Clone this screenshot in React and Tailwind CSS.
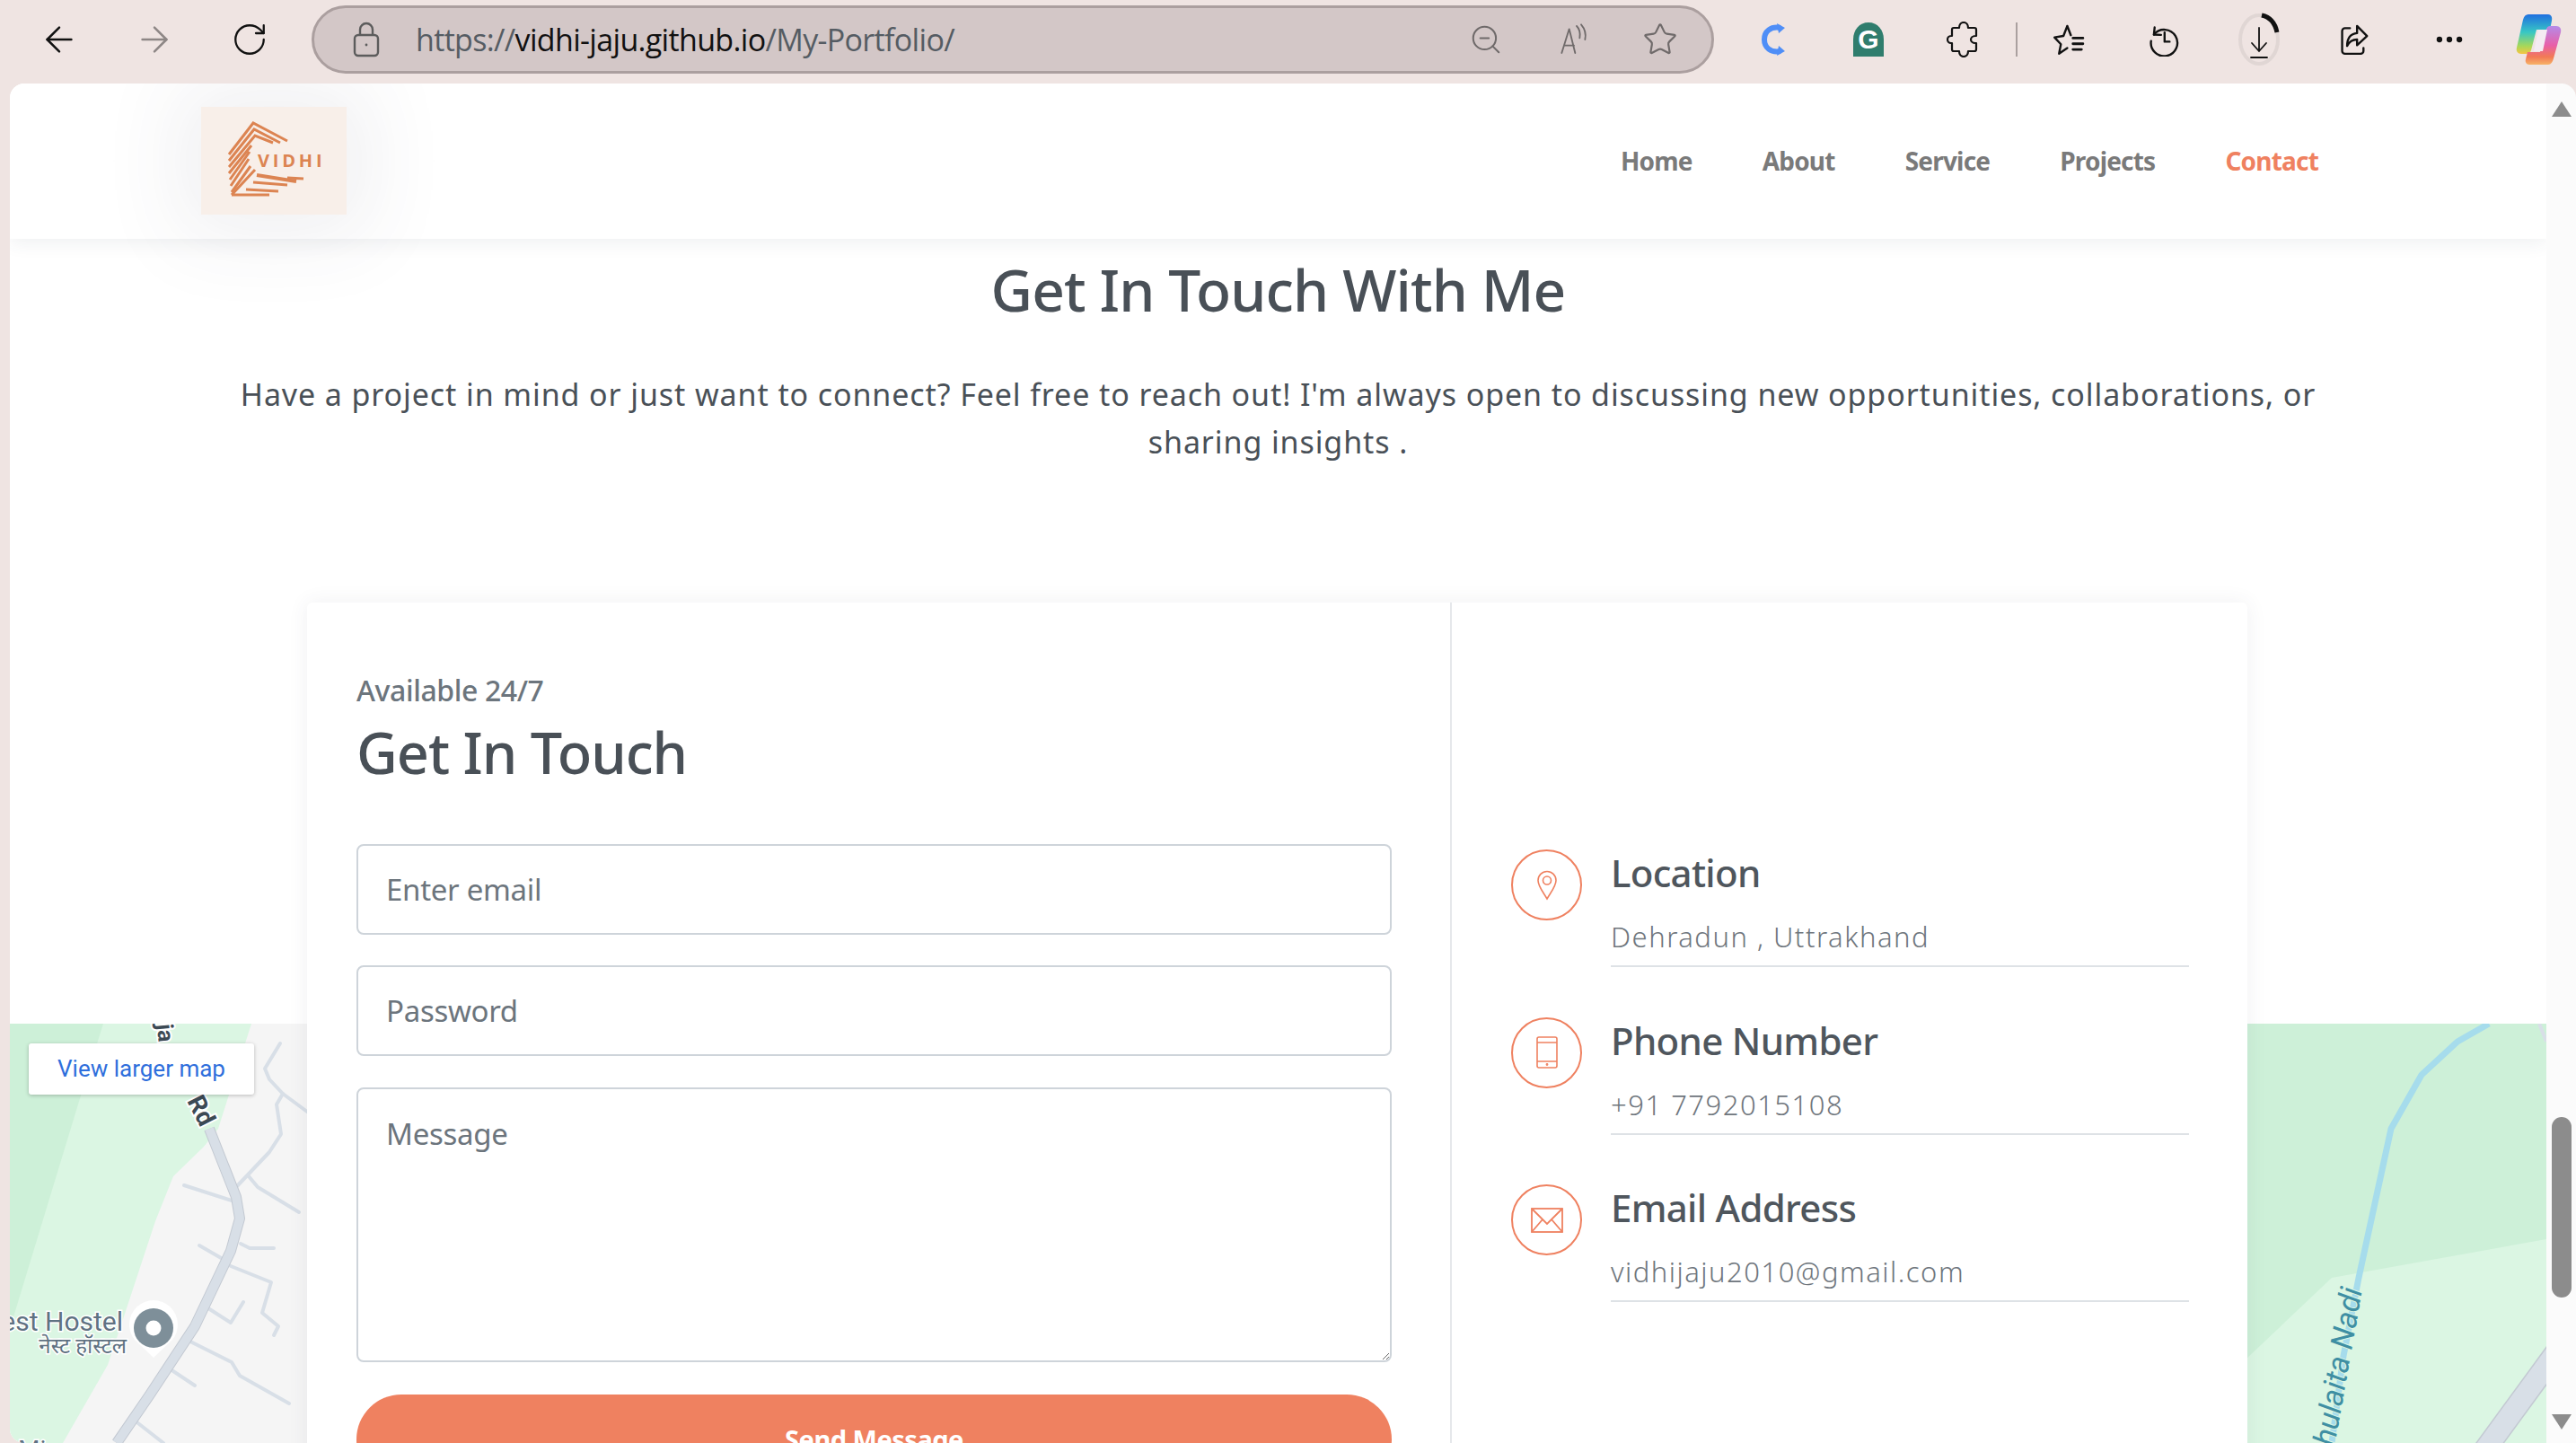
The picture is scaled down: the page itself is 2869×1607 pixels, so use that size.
import React from 'react';
import { ArrowLeft, ArrowRight, RotateCw, ZoomOut, Star, MoreHorizontal } from 'lucide-react';

const sans = "font-['Noto_Sans','Open_Sans',sans-serif]";

function Slot({ children, className = 'w-[106px]' }) {
  return <div className={`flex h-full items-center justify-center flex-shrink-0 ${className}`}>{children}</div>;
}

function Svg({ children, size = 38 }) {
  return (
    <svg width={size} height={size} viewBox="0 0 24 24" fill="none" stroke="#111" strokeWidth="1.3" strokeLinecap="round" strokeLinejoin="round">
      {children}
    </svg>
  );
}

function LockIcon() {
  return (
    <svg width="30" height="40" viewBox="0 0 30 40" fill="none" stroke="#5c5c5c" strokeWidth="2.400">
      <rect x="2" y="15" width="26" height="23" rx="4" />
      <path d="M8 15V9a7 7 0 0 1 14 0v6" />
      <circle cx="15" cy="26" r="1.400" fill="#5c5c5c" stroke="none" />
    </svg>
  );
}

function ReadAloud() {
  return (
    <Svg size={40}>
      <path d="M5 21 10 5l4 16M6.600 16h6.600" stroke="#6f6a6a" strokeWidth="1.100" />
      <path d="M15 3c2 2 2.600 4.600 2 8M18 2c2.600 3 3.400 6.400 2.600 10" stroke="#6f6a6a" strokeWidth="1.100" />
    </Svg>
  );
}

function CIcon() {
  return (
    <svg width="36" height="40" viewBox="0 0 36 40" fill="none">
      <path d="M26 7C15 5 8 11 8 20s7 15 18 13" stroke="#4f8ef7" strokeWidth="6" />
      <path d="M22 2l9 5-7 6zM22 38l9-5-7-6z" fill="#4f8ef7" />
    </svg>
  );
}

function GrammarlyIcon() {
  return (
    <svg width="36" height="40" viewBox="0 0 36 40">
      <path d="M18 1c10 0 17 8 17 19v19H1V20C1 9 8 1 18 1z" fill="#2f7d6d" />
      <text x="18" y="30" textAnchor="middle" fontFamily="Liberation Sans" fontWeight="700" fontSize="30" fill="#fff">G</text>
    </svg>
  );
}

function ExtensionsIcon() {
  return (
    <svg width="38" height="40" viewBox="0 0 38 40" fill="none" stroke="#111" strokeWidth="2.200" strokeLinejoin="round">
      <path d="M14 7c0-3.500 2-6 5-6s5 2.500 5 6h7a2 2 0 0 1 2 2v7h-1c-3 0-5 2-5 4s2 4 5 4h1v7a2 2 0 0 1-2 2h-7c0 3.500-2 6-5 6s-5-2.500-5-6H8a2 2 0 0 1-2-2v-7H5c-2.500 0-4-2-4-4s1.500-4 4-4h1V9a2 2 0 0 1 2-2z" />
    </svg>
  );
}

function FavoritesIcon() {
  return (
    <Svg>
      <path d="M11 2.500 8.300 9.500 2 10.500l4.500 4.800L5.200 22 11 18M11 2.500 13.500 9" strokeWidth="1.500" />
      <path d="M15 11h7M15 15h7M15 19h6" strokeWidth="1.800" />
    </Svg>
  );
}

function HistoryIcon() {
  return (
    <Svg>
      <path d="M5.500 3.500 5 8.500l5 .3" strokeWidth="1.500" />
      <path d="M5 8.500A9.300 9.300 0 1 1 3 13" strokeWidth="1.500" />
      <path d="M12.500 7v6.500H16" strokeWidth="1.500" />
    </Svg>
  );
}

function DownloadIcon() {
  return (
    <svg width="46" height="60" viewBox="0 0 46 60" fill="none">
      <ellipse cx="23" cy="30" rx="21" ry="27" stroke="#e0d6d4" strokeWidth="4" />
      <path d="M26 3c9 2 15 9 17 19" stroke="#111" strokeWidth="5" />
      <path d="M23 17v26M15 34l8 9 8-9M14 50h18" stroke="#111" strokeWidth="1.800" strokeLinecap="round" />
    </svg>
  );
}

function ShareIcon() {
  return (
    <Svg>
      <path d="M9 4H5.500A2 2 0 0 0 3.500 6v14A2 2 0 0 0 5.500 22h11a2 2 0 0 0 2-2v-2" strokeWidth="1.500" />
      <path d="M14 2.500 21 9.500l-7 6.500v-4c-3.500 0-5.500 1.500-7 4.500 0-5.500 2.500-8.500 7-9z" strokeWidth="1.500" />
    </Svg>
  );
}

function CopilotIcon() {
  return (
    <svg width="52" height="62" viewBox="0 0 52 62">
      <defs>
        <linearGradient id="copA" x1="0" y1="0" x2="0" y2="1">
          <stop offset="0" stopColor="#1f6fe0" />
          <stop offset="0.45" stopColor="#38c7c4" />
          <stop offset="0.8" stopColor="#a6d85a" />
          <stop offset="1" stopColor="#f5c542" />
        </linearGradient>
        <linearGradient id="copB" x1="0" y1="0" x2="0" y2="1">
          <stop offset="0" stopColor="#b58be8" />
          <stop offset="0.5" stopColor="#e85fa8" />
          <stop offset="0.8" stopColor="#f27a55" />
          <stop offset="1" stopColor="#f7b267" />
        </linearGradient>
      </defs>
      <path d="M15 3h22c3 0 5 3 4 7l-2 10H24l-6 23c-1 3-3 4-6 4H7c-4 0-6-3-5-7L9 9c1-4 3-6 6-6z" fill="url(#copA)" />
      <path d="M37 59H16c-3 0-5-3-4-6l2-8h14l7-26c1-2 2-3 4-3h7c4 0 6 3 5 7l-8 29c-1 4-3 7-6 7z" fill="url(#copB)" />
      <path d="M26 20h10l-5 24H21z" fill="#f4ebf2" />
    </svg>
  );
}

function BrowserBar() {
  return (
    <div className="flex h-[93px] flex-shrink-0 items-center pl-[13px] pb-[5px] bg-[#efe4e2]">
      <Slot><ArrowLeft size={46} strokeWidth={1.300} color="#111" /></Slot>
      <Slot><ArrowRight size={46} strokeWidth={1.300} color="#8d8685" /></Slot>
      <Slot><RotateCw size={42} strokeWidth={1.300} color="#111" /></Slot>
      <div className="ml-[16px] flex h-[76px] w-[1562px] flex-shrink-0 items-center rounded-full border-[3px] border-[#ab9f9f] bg-[#d3c7c7] pl-[43px]">
        <LockIcon />
        <div className="ml-[40px] flex-1 font-['Open_Sans',sans-serif] text-[34px] tracking-[-0.67px] text-[#555c63]">
          https://<span className="text-[#111]">vidhi-jaju.github.io</span>/My-Portfolio/
        </div>
        <ZoomOut size={38} strokeWidth={1.300} color="#6f6a6a" />
        <div className="ml-[57px]"><ReadAloud /></div>
        <div className="ml-[58px] mr-[37px]"><Star size={40} strokeWidth={1.300} color="#6f6a6a" /></div>
      </div>
      <div className="ml-[13px] flex h-full items-center">
        <Slot><CIcon /></Slot>
        <Slot><GrammarlyIcon /></Slot>
        <Slot><ExtensionsIcon /></Slot>
      </div>
      <div className="ml-[5px] mr-[4px] h-[38px] w-[2px] flex-shrink-0 bg-[#aaa09f]" />
      <Slot><FavoritesIcon /></Slot>
      <Slot><HistoryIcon /></Slot>
      <Slot><DownloadIcon /></Slot>
      <Slot><ShareIcon /></Slot>
      <Slot><MoreHorizontal size={38} strokeWidth={2} color="#111" /></Slot>
      <Slot className="w-[88px] pl-[4px]"><CopilotIcon /></Slot>
    </div>
  );
}

function Logo() {
  const color = '#dc8452';
  return (
    <div className="h-[120px] w-[162px] flex-shrink-0 bg-[#f8efe9] shadow-[0_0_90px_25px_rgba(60,70,90,0.08)]">
      <svg width="162" height="120" viewBox="0 0 162 120" fill="none" stroke={color} strokeWidth="3">
        <path d="M96 38 58 18 31 53M88 40 59 25 31 60M80 40 60 32 31 67" />
        <path d="M31 74 56 43M32 81 54 50M33 88 53 58M34 95 55 66" />
        <path d="M34 98H76M34 98 60 70" />
        <path d="M50 92 86 94M58 84 96 87" />
        <path d="M62 76 106 83" strokeWidth="4" />
        <path d="M96 79 114 80" strokeWidth="3" />
        <text x="63" y="67" stroke="none" fill={color} fontFamily="Open Sans" fontWeight="700" fontSize="20" letterSpacing="3.800">VIDHI</text>
      </svg>
    </div>
  );
}

function Navbar() {
  const links = ['Home', 'About', 'Service', 'Projects'];
  return (
    <nav className="relative z-20 flex h-[173px] items-center justify-between bg-white pl-[213px] pr-[254px] pb-[1px] shadow-[0_6px_18px_rgba(60,70,90,0.07)]">
      <Logo />
      <div className="flex items-center gap-[78px] text-[28px] font-bold tracking-[-0.8px]">
        {links.map((l) => (
          <a key={l} className="text-[#7a7a7a]">{l}</a>
        ))}
        <a className="text-[#ef8160]">Contact</a>
      </div>
    </nav>
  );
}

function MapBackground() {
  const roads = [
    '312,1162 295,1190 300,1202 315,1218 342,1238',
    '315,1218 308,1230 313,1263 300,1283 263,1322',
    '277,1310 287,1322 333,1350',
    '205,1320 258,1337',
    '268,1385 278,1390 305,1390',
    '222,1387 248,1402',
    '257,1410 302,1428 292,1462 310,1477 305,1487',
    '232,1457 257,1473 271,1450',
    '210,1493 258,1517 267,1532 322,1563',
    '190,1525 217,1543',
    '150,1582 182,1607',
  ];
  const mainRoad = '233,1257 263,1333 267,1357 257,1393 217,1477 167,1553 130,1607';
  return (
    <svg className="absolute left-0 top-[1047px]" width="2825" height="467" viewBox="11 1140 2825 467" fill="none">
      <rect x="11" y="1140" width="2825" height="467" fill="#f5f5f5" />
      <path d="M11 1140H280L243 1257 227 1277 193 1310 173 1360 140 1460 120 1520 70 1607H11Z" fill="#dbf6e3" />
      <path d="M11 1140H115L90 1220 17 1460 11 1480Z" fill="#cdf0d8" />
      {roads.map((r) => (
        <polyline key={r} points={r} stroke="#d8dfe7" strokeWidth="4" strokeLinejoin="round" strokeLinecap="round" />
      ))}
      <polyline points={mainRoad} stroke="#c3c9d2" strokeWidth="12" strokeLinejoin="round" />
      <polyline points={mainRoad} stroke="#d8dfe7" strokeWidth="10" strokeLinejoin="round" />
      <g fontFamily="Roboto" fontWeight="700" fill="#3c4a55" stroke="#fff" strokeWidth="4" paintOrder="stroke">
        <text transform="translate(175 1141) rotate(85)" fontSize="25">ja</text>
        <text transform="translate(208 1226) rotate(63)" fontSize="28">Rd</text>
      </g>
      <g fontFamily="Roboto" fill="#5f7282" stroke="#fff" strokeWidth="3" paintOrder="stroke" textAnchor="end">
        <text x="137" y="1482" fontSize="30">est Hostel</text>
        <text x="141" y="1507" fontSize="24" fontFamily="Noto Sans Devanagari, Noto Sans, sans-serif">नेस्ट हॉस्टल</text>
        <text x="20" y="1624" fontSize="28" textAnchor="start">Mi</text>
      </g>
      <path d="M171 1512 150 1492A27 27 0 1 1 192 1492Z" fill="#fff" />
      <circle cx="171" cy="1479" r="22" fill="#7e8f99" />
      <circle cx="171" cy="1479" r="8.500" fill="#fff" />

      <rect x="2500" y="1140" width="336" height="467" fill="#cdf0d8" />
      <path d="M2836 1380 2597 1423 2500 1515V1607H2836Z" fill="#dbf6e3" />
      <polyline points="2772,1140 2737,1160 2697,1197 2663,1257 2627,1423 2610,1510 2597,1607" stroke="#a6dcec" strokeWidth="7" strokeLinejoin="round" />
      <polyline points="2850,1502 2760,1625" stroke="#c3c9d2" strokeWidth="26" />
      <polyline points="2850,1502 2760,1625" stroke="#d8dfe7" strokeWidth="23" />
      <polyline points="2828,1140 2836,1160" stroke="#d8dfe7" strokeWidth="4" />
      <text transform="translate(2631 1436) rotate(-80)" textAnchor="end" fontFamily="Roboto" fontStyle="italic" fontSize="34.500" fill="#3f8fa3" stroke="#dbf6e3" strokeWidth="2" paintOrder="stroke">Chulaita Nadi</text>
    </svg>
  );
}

function ContactItem({ icon, title, value }) {
  return (
    <div className="flex">
      <div className="flex h-[79px] w-[79px] flex-shrink-0 items-center justify-center rounded-full border-2 border-[#ef8160]">
        {icon}
      </div>
      <div className="ml-[32px] h-[131px] flex-1 border-b-2 border-[#dee2e6]">
        <h4 className="text-[42px] leading-[52px] font-medium tracking-[-0.7px] text-[#4f565d]">{title}</h4>
        <p className="mt-[25px] text-[31px] leading-[40px] font-light tracking-[1.500px] text-[#6f767d]">{value}</p>
      </div>
    </div>
  );
}

const PinIcon = (
  <svg width="24" height="34" viewBox="0 0 24 34" fill="none" stroke="#ef8160" strokeWidth="1.600">
    <path d="M12 32C8 25 2 18 2 11.500a10 10 0 0 1 20 0C22 18 16 25 12 32z" />
    <circle cx="12" cy="11.500" r="4.500" />
  </svg>
);

const PhoneIcon = (
  <svg width="24" height="36" viewBox="0 0 24 36" fill="none" stroke="#ef8160" strokeWidth="1.600">
    <rect x="1" y="1" width="22" height="34" rx="2" />
    <path d="M1 7h22M1 28h22" />
    <circle cx="12" cy="31.500" r="0.600" />
  </svg>
);

const MailIcon = (
  <svg width="36" height="28" viewBox="0 0 36 28" fill="none" stroke="#ef8160" strokeWidth="1.800">
    <rect x="1" y="1" width="34" height="26" />
    <path d="M1 1 18 18 35 1M1 27 13 13M35 27 23 13" />
  </svg>
);

function ContactCard() {
  const field = 'w-full rounded-[8px] border-2 border-[#ced4da] px-[31px] text-[33px] tracking-[-0.3px] text-[#495057] outline-none placeholder:text-[#6c757d]';
  return (
    <div className="relative z-10 ml-[331px] mr-[333px] mt-[152px] grid grid-cols-[1275px_1fr] rounded-[6px] bg-white shadow-[0_0_22px_rgba(60,70,90,0.08)]">
      <div className="border-r-2 border-[#e6e8eb] pl-[55px] pr-[65px] pt-[78px] pb-[60px]">
        <p className="text-[32px] leading-[40px] font-medium tracking-[-0.4px] text-[#6c757d]">Available 24/7</p>
        <h2 className="mt-[9px] text-[63px] leading-[80px] font-medium tracking-[-1px] text-[#495057]">Get In Touch</h2>
        <form className="mt-[62px] flex flex-col">
          <input className={`h-[101px] ${field}`} placeholder="Enter email" />
          <input className={`mt-[34px] h-[101px] ${field}`} placeholder="Password" />
          <textarea className={`mt-[35px] h-[306px] pt-[25px] ${field}`} placeholder="Message" />
          <button type="button" className="mt-[36px] h-[100px] rounded-[50px] bg-[#ef8160] text-[29px] font-bold tracking-[-0.5px] text-white">
            Send Message
          </button>
        </form>
      </div>
      <div className="flex flex-col gap-[55.5px] pl-[66px] pr-[65px] pt-[275px]">
        <ContactItem icon={PinIcon} title="Location" value="Dehradun , Uttrakhand" />
        <ContactItem icon={PhoneIcon} title="Phone Number" value="+91 7792015108" />
        <ContactItem icon={MailIcon} title="Email Address" value="vidhijaju2010@gmail.com" />
      </div>
    </div>
  );
}

function Scrollbar() {
  return (
    <div className="flex w-[33px] flex-shrink-0 flex-col items-center bg-[#fbfbfb] pt-[20px]">
      <div className="h-0 w-0 border-x-[11px] border-b-[17px] border-x-transparent border-b-[#8c8c8c]" />
      <div className="mt-[1114px] h-[201px] w-[22px] rounded-[11px] bg-[#8c8c8c]" />
      <div className="mt-[130px] h-0 w-0 border-x-[11px] border-t-[17px] border-x-transparent border-t-[#8c8c8c]" />
    </div>
  );
}

export default function App() {
  return (
    <div className={`flex h-screen w-full flex-col overflow-hidden bg-[#efe4e2] ${sans}`}>
      <BrowserBar />
      <div className="ml-[11px] flex min-h-0 flex-1 overflow-hidden rounded-t-[16px] rounded-bl-[16px]">
        <main className="relative min-w-0 flex-1 overflow-hidden bg-white">
          <MapBackground />
          <Navbar />
          <section className="relative z-10 pt-[24px] text-center">
            <h1 className="text-[64px] leading-[66px] font-medium tracking-[-0.85px] text-[#495057]">Get In Touch With Me</h1>
            <p className="mx-auto mt-[57px] w-[2320px] text-[34px] leading-[53px] tracking-[0.9px] text-[#495057]">
              Have a project in mind or just want to connect? Feel free to reach out! I'm always open to discussing new opportunities, collaborations, or sharing insights .
            </p>
          </section>
          <ContactCard />
          <a className="absolute left-[21px] top-[1069px] z-10 flex h-[57px] w-[251px] items-center justify-center rounded-[3px] bg-white font-['Roboto',sans-serif] text-[26px] text-[#2f6fdc] shadow-[0_1px_4px_rgba(0,0,0,0.25)]">
            View larger map
          </a>
        </main>
        <Scrollbar />
      </div>
    </div>
  );
}
